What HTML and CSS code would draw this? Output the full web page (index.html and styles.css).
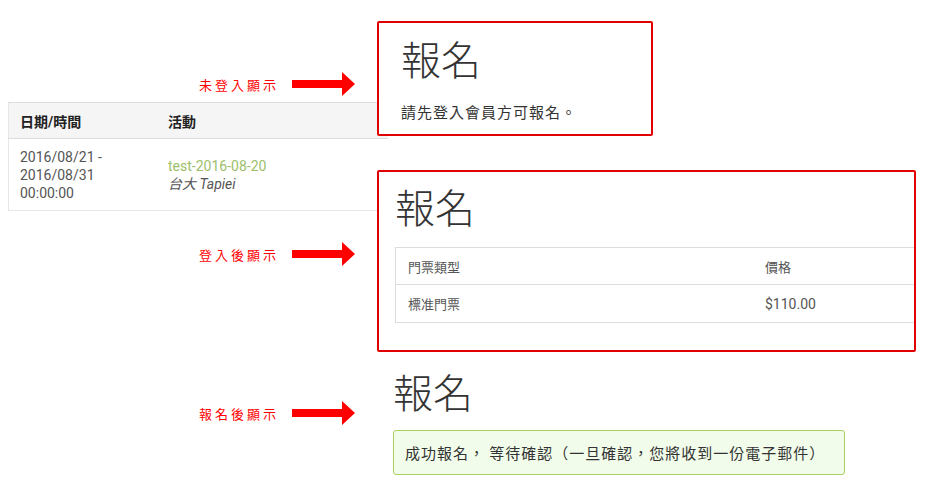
FILE: index.html
```html
<!DOCTYPE html>
<html lang="zh-Hant">
<head>
    <meta charset="UTF-8">
    <meta name="viewport" content="width=device-width, initial-scale=1.0">
    <title>報名</title>
    <link rel="stylesheet" href="styles.css">
</head>
<body>
    <div class="canvas">
        <table class="events">
            <thead>
                <tr>
                    <th class="col-date">日期/時間</th>
                    <th>活動</th>
                </tr>
            </thead>
            <tbody>
                <tr>
                    <td class="col-date">2016/08/21 -<br>2016/08/31<br>00:00:00</td>
                    <td><a class="event-link" href="#">test-2016-08-20</a><br><em>台大 Tapiei</em></td>
                </tr>
            </tbody>
        </table>

        <div class="note note-1">
            <span class="note-label">未登入顯示</span>
            <svg class="arrow" width="63" height="26" viewBox="0 0 63 26"><path d="M0 9h50V1l13 12-13 12v-8H0z" fill="#f00"/></svg>
        </div>
        <div class="note note-2">
            <span class="note-label">登入後顯示</span>
            <svg class="arrow" width="63" height="26" viewBox="0 0 63 26"><path d="M0 9h50V1l13 12-13 12v-8H0z" fill="#f00"/></svg>
        </div>
        <div class="note note-3">
            <span class="note-label">報名後顯示</span>
            <svg class="arrow" width="63" height="26" viewBox="0 0 63 26"><path d="M0 9h50V1l13 12-13 12v-8H0z" fill="#f00"/></svg>
        </div>

        <section class="panel panel-1 framed">
            <h2 class="panel-title">報名</h2>
            <p class="panel-text">請先登入會員方可報名。</p>
        </section>

        <section class="panel panel-2 framed">
            <h2 class="panel-title">報名</h2>
            <table class="tickets">
                <tr>
                    <td class="col-type">門票類型</td>
                    <td>價格</td>
                </tr>
                <tr>
                    <td class="col-type">標准門票</td>
                    <td class="price">$110.00</td>
                </tr>
            </table>
        </section>

        <section class="panel panel-3">
            <h2 class="panel-title">報名</h2>
            <div class="alert">成功報名， 等待確認（一旦確認，您將收到一份電子郵件）</div>
        </section>
    </div>
</body>
</html>
```

FILE: styles.css
```css
body {
    margin: 0;
    background: #fff;
    font-family: Roboto, "Noto Sans CJK TC", sans-serif;
    color: #333;
}

.canvas {
    position: relative;
    width: 930px;
    height: 500px;
    overflow: hidden;
}

/* left: event list */
.events {
    position: absolute;
    left: 8px;
    top: 102px;
    width: 380px;
    border-collapse: collapse;
    border-left: 1px solid #e6e6e6;
    font-size: 14px;
}

.events th {
    background: #f5f5f5;
    text-align: left;
    font-weight: bold;
    color: #222;
    height: 35px;
    padding: 0 11px;
    border-top: 1px solid #ddd;
    border-bottom: 1px solid #ddd;
}

.events td {
    padding: 9px 11px 8px;
    line-height: 18px;
    color: #555;
    border-bottom: 1px solid #e6e6e6;
    vertical-align: middle;
}

.events .col-date {
    width: 126px;
}

.event-link {
    color: #9cc06a;
    text-decoration: none;
}

.events em {
    color: #555;
}

/* red annotations */
.note {
    position: absolute;
    left: 199px;
    display: flex;
    align-items: center;
}

.note-1 { top: 71px; }
.note-2 { top: 241px; }
.note-3 { top: 400px; }

.note-label {
    width: 93px;
    white-space: nowrap;
    color: #f00;
    font-family: "Noto Sans CJK TC", sans-serif;
    font-size: 13px;
    letter-spacing: 3px;
}

/* panels */
.panel {
    position: absolute;
    background: #fff;
}

.framed {
    border: 2px solid #e10000;
    border-radius: 2px;
    box-sizing: border-box;
}

.panel-1 {
    left: 377px;
    top: 21px;
    width: 276px;
    height: 115px;
    padding: 9px 22px;
}

.panel-2 {
    left: 377px;
    top: 170px;
    width: 539px;
    height: 182px;
    padding: 8px 0 0 16px;
}

.panel-3 {
    left: 393px;
    top: 365px;
    width: 452px;
}

.panel-title {
    margin: 0;
    font-family: "Noto Sans CJK TC", serif;
    font-weight: 300;
    font-size: 40px;
    line-height: 52px;
    color: #333;
}

.panel-text {
    margin: 17px 0 0;
    font-size: 15px;
    letter-spacing: 1px;
    font-family: "Noto Sans CJK TC", sans-serif;
    color: #333;
}

.tickets {
    margin-top: 15px;
    width: 100%;
    border-collapse: collapse;
    border: 1px solid #ddd;
    border-right: none;
    font-size: 13px;
    color: #555;
}

.tickets td {
    height: 36px;
    padding: 0 12px;
    border-bottom: 1px solid #ddd;
}

.tickets tr + tr td {
    height: 37px;
}

.tickets .col-type {
    width: 333px;
}

.price {
    font-family: Roboto, sans-serif;
    font-size: 14px;
}

.alert {
    margin-top: 13px;
    background: #f1fcea;
    border: 1px solid #a9d25c;
    border-radius: 3px;
    padding: 11px 11px;
    font-size: 15px;
    letter-spacing: 1px;
    font-family: "Noto Sans CJK TC", sans-serif;
    color: #333;
    line-height: 21px;
}
```
